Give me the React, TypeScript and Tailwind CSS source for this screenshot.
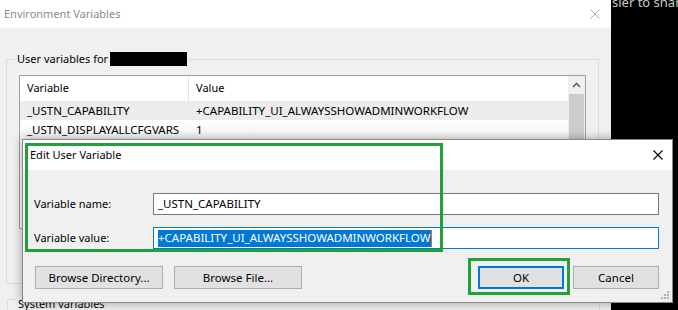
import React from "react";

const font = { fontFamily: '"Noto Sans", "Open Sans", sans-serif' };

function XIcon({ color, size, sw }: { color: string; size: number; sw: number }) {
  return (
    <svg width={size} height={size} viewBox="0 0 10 10">
      <path d="M0.5 0.5 L9.5 9.5 M9.5 0.5 L0.5 9.5" stroke={color} strokeWidth={sw} fill="none" />
    </svg>
  );
}

function Btn({ children, primary, wide }: { children: React.ReactNode; primary?: boolean; wide?: boolean }) {
  return (
    <div
      className={
        "flex items-center justify-center h-[23px] bg-[#e1e1e1] text-[11.5px] text-black " +
        (primary ? "border-2 border-[#0078d7] " : "border border-[#adadad] ") +
        (wide ? "w-[128px]" : "w-[86px]")
      }
    >
      {children}
    </div>
  );
}

export default function App() {
  return (
    <div className="relative w-[678px] h-[310px] bg-black overflow-hidden" style={font}>
      {/* text behind in black area */}
      <div className="absolute left-[612px] top-[-6px] text-[13px] leading-[16px] text-[#c8c8c8] whitespace-nowrap">sier to shar</div>

      {/* Environment Variables window */}
      <div className="absolute left-0 top-0 w-[611px] h-[310px] bg-[#f0f0f0] flex flex-col">
        <div className="h-[28px] bg-white flex items-center justify-between pl-[4px] pr-[11px] shrink-0">
          <span className="text-[11px] text-[#8a8a8a]">Environment Variables</span>
          <XIcon color="#a0a0a0" size={10} sw={0.9} />
        </div>
        <div className="flex flex-col pl-[6px] pr-[12px]">
          {/* User variables group */}
          <div className="relative mt-[31px] h-[225px] border border-[#dcdcdc] w-[593px]">
            <div className="absolute left-[8px] top-[-9px] flex items-center bg-[#f0f0f0] pl-[2px] pr-[2px] h-[16px]">
              <span className="text-[11px] text-black">User variables for</span>
              <span className="ml-[2px] w-[77px] h-[14px] bg-black" />
            </div>
            <div className="ml-[12px] mt-[15px] w-[567px] h-[154px] border border-[#a0a0a0] bg-white flex">
              <div className="flex-1 flex flex-col">
                <div className="h-[25px] flex items-center text-[11px] text-black">
                  <div className="w-[169px] pl-[7px] h-full flex items-center border-r border-[#e5e5e5]">Variable</div>
                  <div className="pl-[7px]">Value</div>
                </div>
                <div className="h-[19px] flex items-center text-[11.5px] text-black bg-[#ececec]">
                  <div className="w-[169px] pl-[7px]">_USTN_CAPABILITY</div>
                  <div className="pl-[7px]">+CAPABILITY_UI_ALWAYSSHOWADMINWORKFLOW</div>
                </div>
                <div className="h-[20px] flex items-center text-[11.5px] text-black bg-gradient-to-b from-white to-[#f4f4f4]">
                  <div className="w-[169px] pl-[7px]">_USTN_DISPLAYALLCFGVARS</div>
                  <div className="pl-[7px]">1</div>
                </div>
              </div>
              <div className="w-[17px] bg-[#f0f0f0] flex flex-col items-center">
                <div className="h-[17px] flex items-center justify-center">
                  <svg width="9" height="6" viewBox="0 0 9 6">
                    <path d="M1 5 L4.5 1.5 L8 5" stroke="#606060" strokeWidth="1.6" fill="none" />
                  </svg>
                </div>
                <div className="w-[15px] flex-1 mt-[1px] bg-[#cdcdcd]" />
              </div>
            </div>
          </div>
          {/* System variables group */}
          <div className="relative mt-[15px] h-[40px] border border-[#dcdcdc] w-[593px] ml-[1px]">
            <div className="absolute left-[8px] top-[-4px] bg-[#f0f0f0] px-[2px] text-[11px] text-black">System variables</div>
          </div>
        </div>
      </div>

      {/* Edit User Variable dialog */}
      <div className="absolute left-[22px] top-[139px] w-[651px] h-[164px] border border-[#8a8a8a] bg-[#f0f0f0] flex flex-col shadow-[0_0_10px_rgba(0,0,0,0.35)]">
        <div className="h-[30px] bg-white flex items-center justify-between pl-[7px] pr-[9px] shrink-0">
          <span className="text-[11px] text-black">Edit User Variable</span>
          <XIcon color="#000" size={10} sw={1.1} />
        </div>
        <div className="flex flex-col pl-[11px] pr-[13px] pt-[23px]">
          <div className="flex items-center">
            <div className="w-[119px] text-[11px] text-black">Variable name:</div>
            <div className="flex-1 h-[22px] border border-[#7a7a7a] bg-white flex items-center pl-[4px] text-[11.5px] text-black">
              _USTN_CAPABILITY
            </div>
          </div>
          <div className="flex items-center mt-[12px]">
            <div className="w-[119px] text-[11px] text-black">Variable value:</div>
            <div className="flex-1 h-[22px] border border-[#0078d7] bg-white flex items-center pl-[4px] text-[11.5px]">
              <span className="bg-[#0078d7] text-white h-[17px] flex items-center pr-[1px]">
                +CAPABILITY_UI_ALWAYSSHOWADMINWORKFLOW
              </span>
              <span className="w-[1px] h-[17px] bg-[#e07010]" />
            </div>
          </div>
          <div className="flex items-center mt-[17px] pl-[1px]">
            <Btn wide>Browse Directory...</Btn>
            <div className="ml-[11px]">
              <Btn wide>Browse File...</Btn>
            </div>
            <div className="flex-1" />
            <Btn primary>OK</Btn>
            <div className="ml-[9px]">
              <Btn>Cancel</Btn>
            </div>
          </div>
        </div>
        {/* resize grip */}
        <svg className="absolute right-[3px] bottom-[3px]" width="8" height="8" viewBox="0 0 8 8">
          <rect x="6" y="0" width="2" height="2" fill="#b0b0b0" />
          <rect x="3" y="3" width="2" height="2" fill="#b0b0b0" />
          <rect x="6" y="3" width="2" height="2" fill="#b0b0b0" />
          <rect x="0" y="6" width="2" height="2" fill="#b0b0b0" />
          <rect x="3" y="6" width="2" height="2" fill="#b0b0b0" />
          <rect x="6" y="6" width="2" height="2" fill="#b0b0b0" />
        </svg>
      </div>

      {/* green highlight annotations */}
      <div className="absolute left-[25px] top-[143px] w-[418px] h-[109px] border-[3px] border-[#22a03a]" />
      <div className="absolute left-[468px] top-[258px] w-[102px] h-[37px] border-[3px] border-[#22a03a]" />
    </div>
  );
}
